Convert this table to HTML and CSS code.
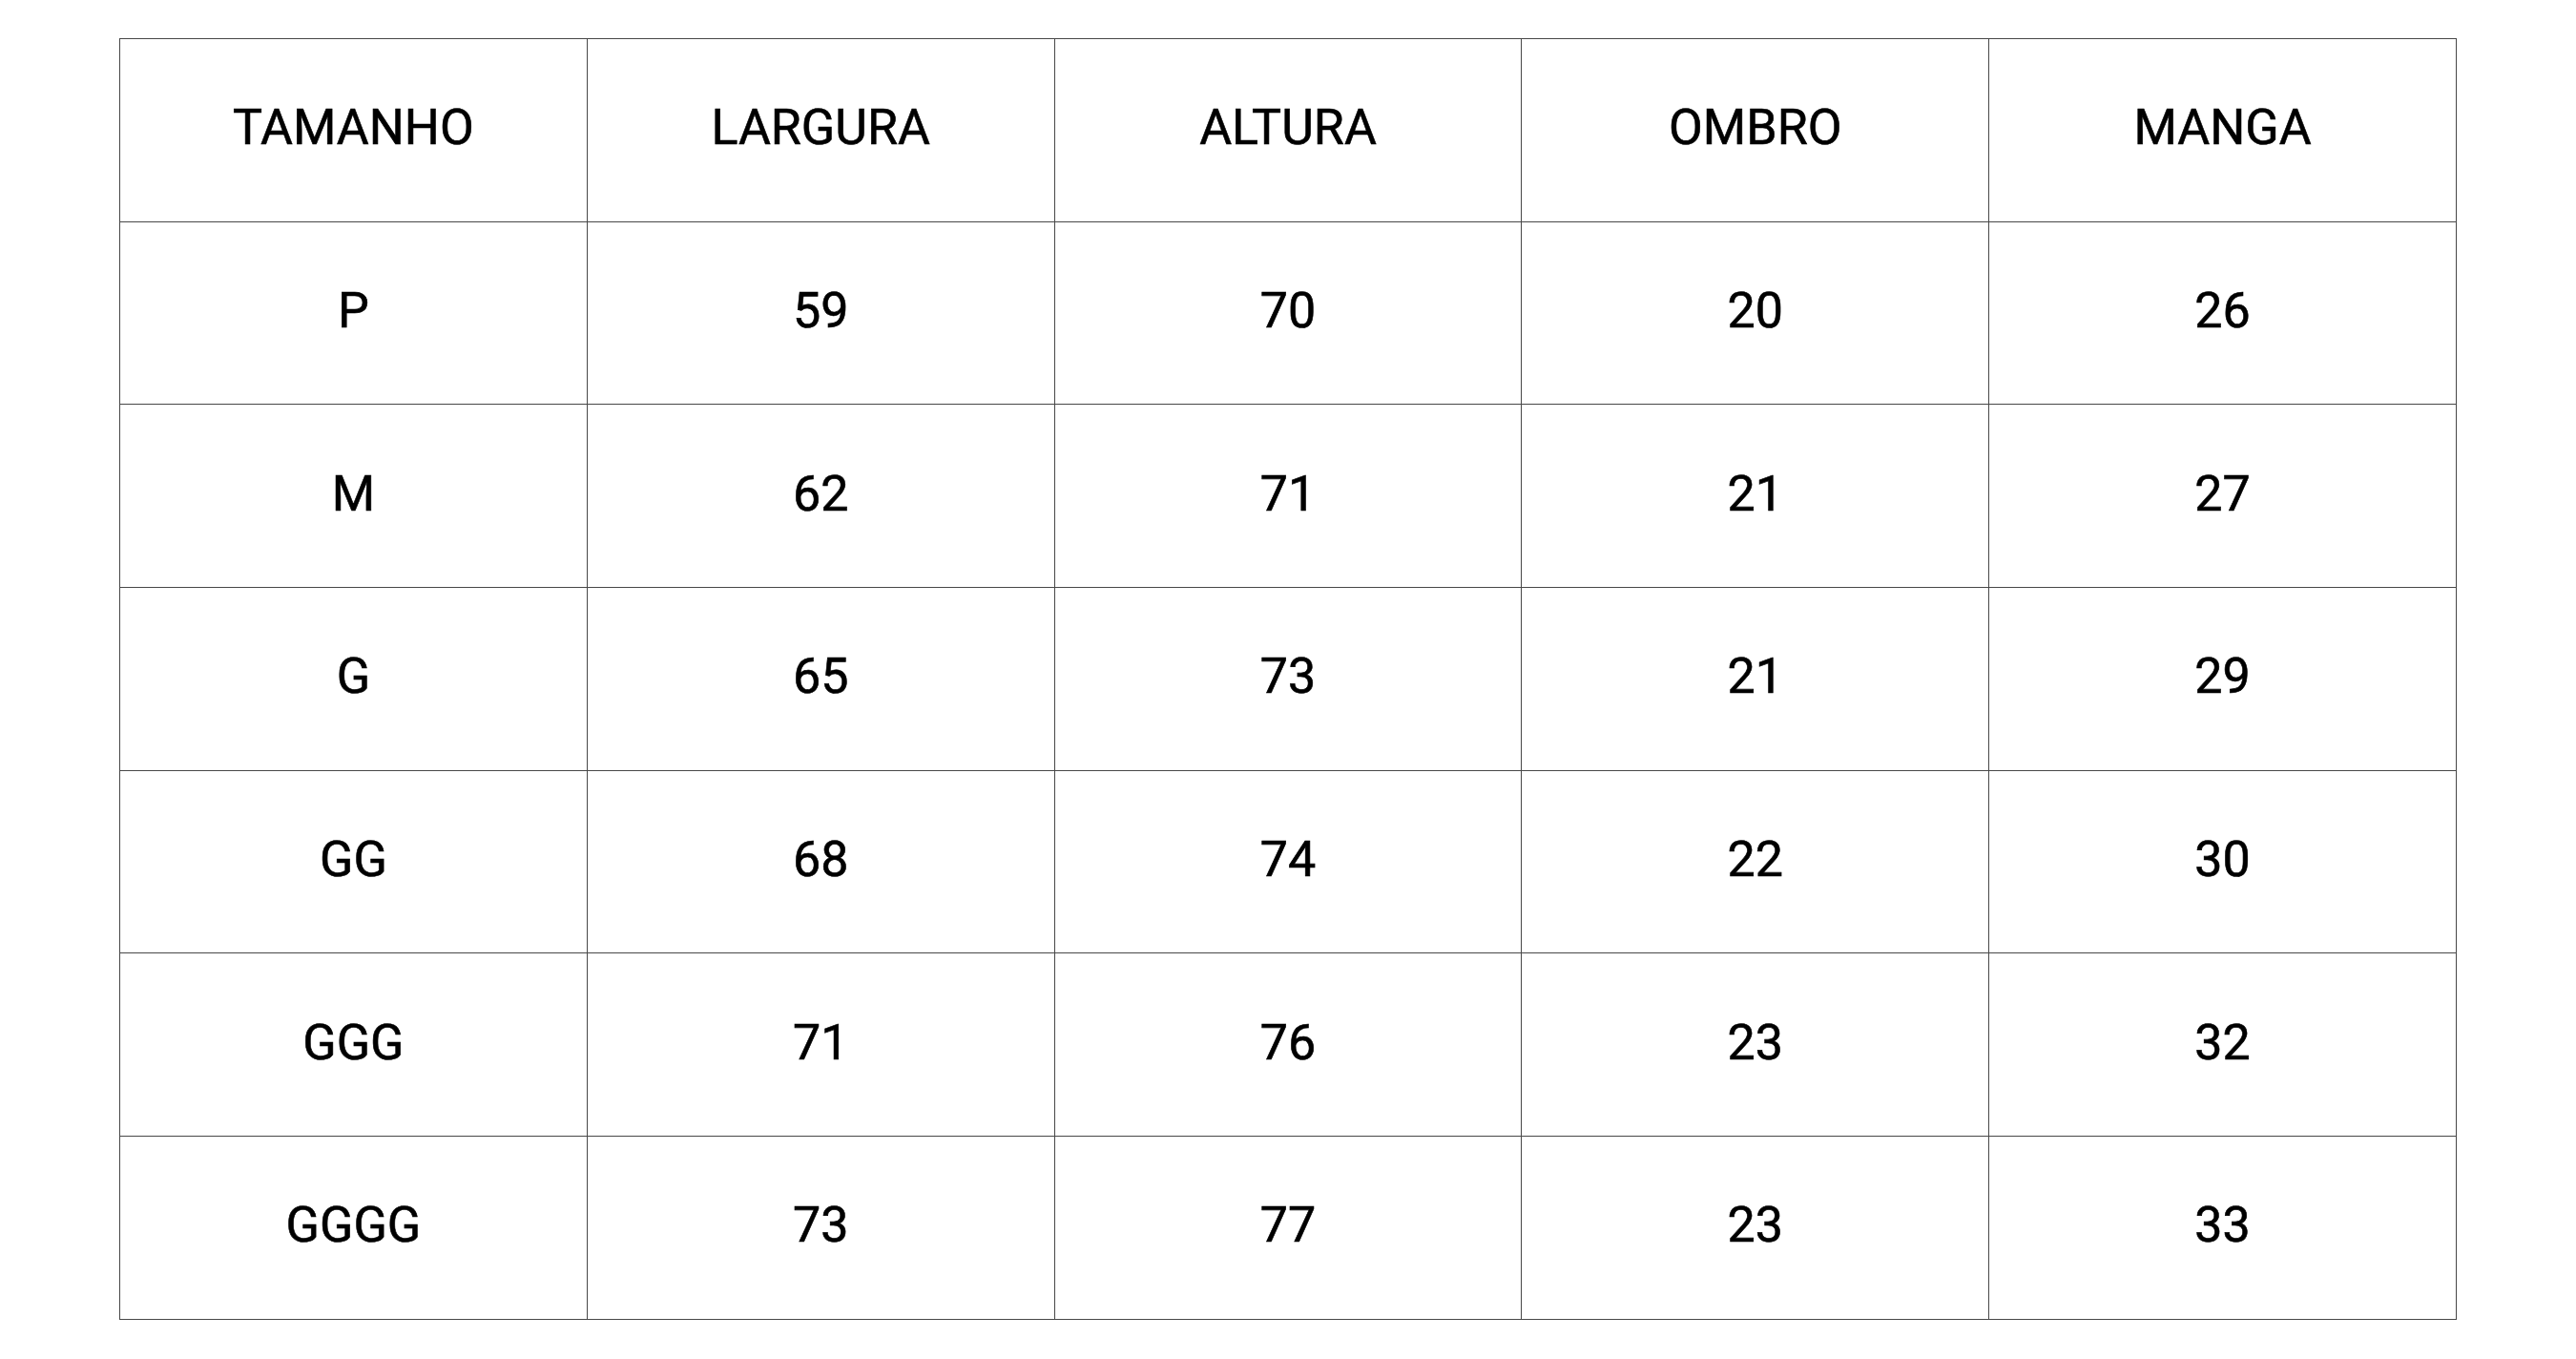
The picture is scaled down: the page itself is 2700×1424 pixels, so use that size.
FILE: index.html
```html
<!DOCTYPE html>
<html lang="pt">
<head>
<meta charset="utf-8">
<title>Tabela de medidas</title>
<link rel="stylesheet" href="styles.css">
</head>
<body>
<main class="page">
<table class="sizes">
<thead>
<tr><th>TAMANHO</th><th>LARGURA</th><th>ALTURA</th><th>OMBRO</th><th>MANGA</th></tr>
</thead>
<tbody>
<tr><td>P</td><td>59</td><td>70</td><td>20</td><td>26</td></tr>
<tr><td>M</td><td>62</td><td>71</td><td>21</td><td>27</td></tr>
<tr><td>G</td><td>65</td><td>73</td><td>21</td><td>29</td></tr>
<tr><td>GG</td><td>68</td><td>74</td><td>22</td><td>30</td></tr>
<tr><td>GGG</td><td>71</td><td>76</td><td>23</td><td>32</td></tr>
<tr><td>GGGG</td><td>73</td><td>77</td><td>23</td><td>33</td></tr>
</tbody>
</table>
</main>
</body>
</html>
```
FILE: styles.css
```css
html, body {
  margin: 0;
  padding: 0;
  background: #ffffff;
}
.page {
  padding: 40px 0 0 125px;
}
.sizes {
  width: 2450px;
  border-collapse: collapse;
  table-layout: fixed;
  font-family: Roboto, "Noto Sans", sans-serif;
  font-size: 52px;
  color: #000;
}
.sizes th,
.sizes td {
  border: 1px solid #484848;
  height: 191.7px;
  padding: 0 0 4px 0;
  box-sizing: border-box;
  text-align: center;
  vertical-align: middle;
  font-weight: 400;
  line-height: 1;
  -webkit-text-stroke: 0.6px #000;
}
```
